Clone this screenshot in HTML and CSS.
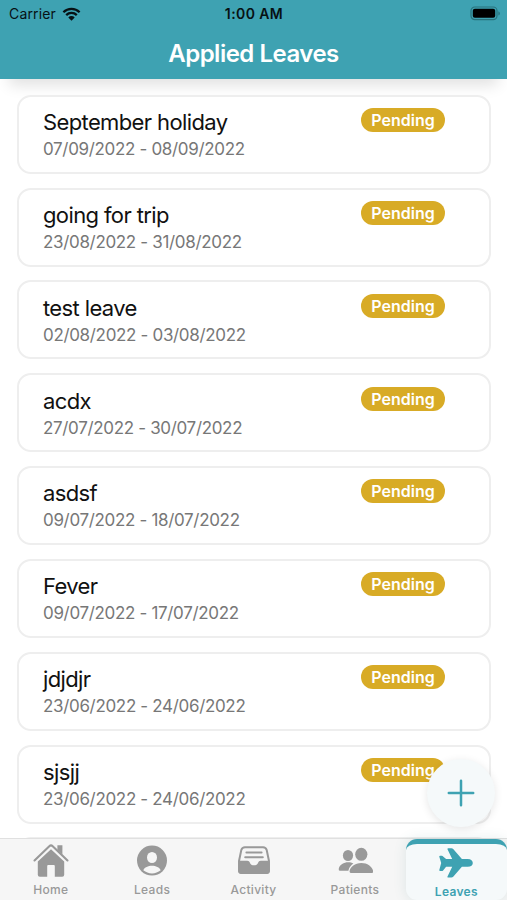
FILE: index.html
```html
<!DOCTYPE html>
<html lang="en">

<head>
    <meta charset="UTF-8">
    <meta name="viewport" content="width=device-width, initial-scale=1.0">
    <title>Applied Leaves</title>
    <link rel="stylesheet" href="styles.css">
</head>

<body>
    <div class="app">
        <header class="header">
            <div class="status-bar">
                <div class="carrier">
                    <span>Carrier</span>
                    <svg class="wifi" viewBox="0 0 19 14">
                        <path d="M1.4 5.2a11.6 11.6 0 0 1 16.2 0M4.2 8.1a7.6 7.6 0 0 1 10.6 0" fill="none" stroke="#071114" stroke-width="2.3"/>
                        <path d="M6.3 10.4a4.6 4.6 0 0 1 6.4 0L9.5 13.7z" fill="#071114"/>
                    </svg>
                </div>
                <span class="clock">1:00 AM</span>
                <svg class="battery" viewBox="0 0 31 15">
                    <rect x="1" y="1" width="26" height="12.6" rx="3.8" fill="none" stroke="#28737d" stroke-width="1.2"/>
                    <rect x="2.8" y="2.8" width="22.4" height="9" rx="2" fill="#000"/>
                    <path d="M28.4 5.2c2 .8 2 3.5 0 4.3z" fill="#28737d"/>
                </svg>
            </div>
            <h1 class="title">Applied Leaves</h1>
        </header>

        <main class="list">
            <div class="card">
                <div>
                    <h2 class="name">September holiday</h2>
                    <p class="dates">07/09/2022 - 08/09/2022</p>
                </div>
                <span class="badge">Pending</span>
            </div>
            <div class="card">
                <div>
                    <h2 class="name">going for trip</h2>
                    <p class="dates">23/08/2022 - 31/08/2022</p>
                </div>
                <span class="badge">Pending</span>
            </div>
            <div class="card">
                <div>
                    <h2 class="name">test leave</h2>
                    <p class="dates">02/08/2022 - 03/08/2022</p>
                </div>
                <span class="badge">Pending</span>
            </div>
            <div class="card">
                <div>
                    <h2 class="name">acdx</h2>
                    <p class="dates">27/07/2022 - 30/07/2022</p>
                </div>
                <span class="badge">Pending</span>
            </div>
            <div class="card">
                <div>
                    <h2 class="name">asdsf</h2>
                    <p class="dates">09/07/2022 - 18/07/2022</p>
                </div>
                <span class="badge">Pending</span>
            </div>
            <div class="card">
                <div>
                    <h2 class="name">Fever</h2>
                    <p class="dates">09/07/2022 - 17/07/2022</p>
                </div>
                <span class="badge">Pending</span>
            </div>
            <div class="card">
                <div>
                    <h2 class="name">jdjdjr</h2>
                    <p class="dates">23/06/2022 - 24/06/2022</p>
                </div>
                <span class="badge">Pending</span>
            </div>
            <div class="card">
                <div>
                    <h2 class="name">sjsjj</h2>
                    <p class="dates">23/06/2022 - 24/06/2022</p>
                </div>
                <span class="badge">Pending</span>
            </div>
            <div class="card"></div>
        </main>

        <button class="add-button" aria-label="Add leave">
            <svg viewBox="0 0 28 28">
                <path d="M14 1.8v24.4M1.8 14h24.4" fill="none" stroke="#3ea2b2" stroke-width="2.5" stroke-linecap="round"/>
            </svg>
        </button>

        <nav class="tabs">
            <a class="tab">
                <svg class="icon" viewBox="0 0 36 36">
                    <path d="M1.5 18.4L16.3 4.2q1.7-1.6 3.4 0L34.5 18.4" fill="none" stroke="#999" stroke-width="2.1" stroke-linecap="round"/>
                    <path d="M24.4 3.2h5v9.6l-5-4.8z"/>
                    <path d="M18 7.2l13.2 12.4v13.1q0 2-2 2h-7.4V24q0-1-1-1h-5.6q-1 0-1 1v10.7H6.8q-2 0-2-2V19.6z"/>
                </svg>
                <span>Home</span>
            </a>
            <a class="tab">
                <svg class="icon" viewBox="0 0 36 36">
                    <circle cx="18" cy="18.6" r="15"/>
                    <ellipse cx="18" cy="15.5" rx="5" ry="5.6" fill="#f6f6f6"/>
                    <path d="M9.3 28.3c2.2-6 15.2-6 17.4 0-4.9 4.1-12.5 4.1-17.4 0z" fill="#f6f6f6"/>
                </svg>
                <span>Leads</span>
            </a>
            <a class="tab">
                <svg class="icon" viewBox="0 0 36 36">
                    <path d="M9 5.2h18q2.9 0 3.7 2.9l2.2 10.4v9.8q0 2.7-3 2.7H6.1q-3 0-3-2.7v-9.8L5.3 8.1Q6.1 5.2 9 5.2z" fill="none" stroke="#999" stroke-width="2"/>
                    <path d="M2.1 18.7h9.2q2.1 0 2.5 1.8c1 3.8 7.4 3.8 8.4 0q.4-1.8 2.5-1.8h9.2v10.1q0 3.3-3.4 3.3h-25q-3.4 0-3.4-3.3z"/>
                    <path d="M10.4 10.4h15.2M9.2 15.2h17.6" fill="none" stroke="#999" stroke-width="2" stroke-linecap="round"/>
                </svg>
                <span>Activity</span>
            </a>
            <a class="tab">
                <svg class="icon" viewBox="0 0 36 36">
                    <ellipse cx="11" cy="13.5" rx="5.1" ry="5.5"/>
                    <path d="M16.4 21.5c-2 1.6-4.5 3.7-5 7.3H3.2q-1.7 0-1.5-1.9c1.1-6 9.5-8.4 14.7-5.4z"/>
                    <ellipse cx="24.3" cy="12.3" rx="6.1" ry="6.5"/>
                    <path d="M24.3 20.9c6.4 0 11.1 3.7 11.8 8.2q.2 1.9-1.7 1.9H14.3q-1.9 0-1.7-1.9c.7-4.5 5.3-8.2 11.7-8.2z"/>
                </svg>
                <span>Patients</span>
            </a>
            <a class="tab active">
                <svg class="icon" viewBox="0 0 36 36">
                    <path d="M14.2 14L9.5 4.3q-.3-1 .7-1h3.2q1.1 0 1.8.8L23.9 14h5.8c6.8 0 6.8 7.8 0 7.8h-5.8l-8.7 9.9q-.7.8-1.8.8h-3.2q-1 0-.7-1l4.7-9.7H8.1l-3 3.6q-.5.6-1.3.6H2.1q-1 0-.8-1l1.9-7.1-1.9-6.1q-.2-1 .8-1h1.7q.8 0 1.3.6L8.1 14z"/>
                </svg>
                <span>Leaves</span>
            </a>
        </nav>
    </div>
</body>

</html>
```
FILE: styles.css
```css
* {
    box-sizing: border-box;
}

body {
    margin: 0;
    background: #fff;
    font-family: Inter, "Liberation Sans", sans-serif;
}

.app {
    position: relative;
    display: flex;
    flex-direction: column;
    height: 900px;
    overflow: hidden;
}

.header {
    height: 79px;
    flex: none;
    background: #3ea2b2;
    box-shadow: 0 15px 14px -9px rgba(0, 0, 0, 0.12);
}

.status-bar {
    display: grid;
    grid-template-columns: 1fr auto 1fr;
    align-items: center;
    height: 27px;
    padding: 0 6px 0 9px;
    color: #071114;
    font-size: 14px;
}

.carrier {
    display: flex;
    align-items: center;
    gap: 6px;
    letter-spacing: 0.15px;
}

.wifi {
    width: 19px;
    height: 14px;
}

.clock {
    margin-right: 2px;
    font-weight: 600;
    letter-spacing: 0.4px;
}

.battery {
    justify-self: end;
    width: 31px;
    height: 15px;
}

.title {
    margin: 0;
    color: #fff;
    font-size: 24px;
    font-weight: 600;
    line-height: 53px;
    text-align: center;
    letter-spacing: -0.5px;
}

.list {
    display: flex;
    flex: 1;
    flex-direction: column;
    gap: 13.85px;
    min-height: 0;
    padding: 15.7px 16px 0 16.5px;
    overflow: hidden;
}

.card {
    display: flex;
    flex: none;
    justify-content: space-between;
    align-items: flex-start;
    height: 79px;
    padding: 11.3px 44px 0 24.5px;
    border: 2px solid #eee;
    border-radius: 14px;
    background: #fff;
}

.name {
    margin: 0;
    color: #111;
    font-size: 22px;
    font-weight: 400;
    line-height: 28px;
    letter-spacing: -0.62px;
}

.dates {
    margin: 0;
    color: #777;
    font-size: 17px;
    line-height: 27px;
    letter-spacing: -0.33px;
}

.badge {
    width: 84px;
    height: 24px;
    border-radius: 12px;
    background: #d8ab26;
    color: #fff;
    font-size: 16px;
    font-weight: 600;
    line-height: 24px;
    text-align: center;
}

.add-button {
    position: absolute;
    top: 759px;
    left: 427px;
    display: grid;
    place-items: center;
    width: 68px;
    height: 68px;
    padding: 0;
    border: 0;
    border-radius: 50%;
    background: #f5f9fa;
    box-shadow: 0 2px 9px rgba(0, 0, 0, 0.1);
}

.add-button svg {
    width: 28px;
    height: 28px;
}

.tabs {
    display: flex;
    flex: none;
    height: 62px;
    border-top: 1px solid #e0e0e0;
    background: #f6f6f6;
}

.tab {
    display: flex;
    flex: 1;
    flex-direction: column;
    align-items: center;
    padding-top: 3px;
    color: #999;
    font-size: 12px;
    font-weight: 500;
    line-height: 20px;
    letter-spacing: 0.3px;
}

.icon {
    flex: none;
    width: 36px;
    height: 36px;
    margin-bottom: 2px;
    fill: #999;
}

.active {
    height: 61px;
    padding-top: 1px;
    border-top: 5px solid #3ea2b2;
    border-radius: 11px;
    background: #f5f9fa;
    box-shadow: 0 0 13px rgba(62, 130, 125, 0.14);
    color: #3ea2b2;
    font-weight: 600;
}

.active .icon {
    margin-bottom: 0;
    fill: #3ea2b2;
}

.active span {
    line-height: 21px;
}
```
